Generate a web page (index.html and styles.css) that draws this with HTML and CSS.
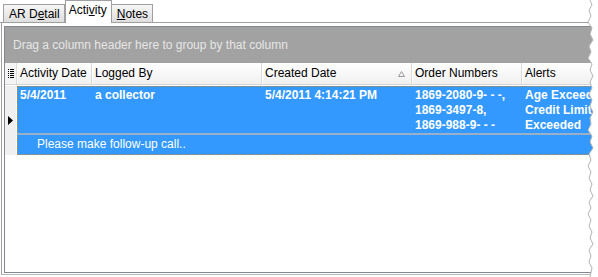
FILE: index.html
```html
<!DOCTYPE html>
<html>
  <head>
    <meta charset="utf-8" />
    <title>AR Activity</title>
    <link rel="stylesheet" href="styles.css">
  </head>
  <body>
    <div class="frame">
      <div class="tabs">
        <div class="tab">AR D<u>e</u>tail</div>
        <div class="tab active">Acti<u>v</u>ity</div>
        <div class="tab"><u>N</u>otes</div>
      </div>
      <div class="page">
        <div class="grid">
          <div class="group-panel">Drag a column header here to group by that column</div>
          <div class="grid-head">
            <div class="sel">
              <svg width="6" height="10" viewBox="0 0 6 10">
                <rect x="0" y="0" width="1" height="1" fill="#000" />
                <rect x="2" y="0" width="4" height="1" fill="#000" />
                <rect x="0" y="2" width="1" height="1" fill="#000" />
                <rect x="2" y="2" width="4" height="1" fill="#000" />
                <rect x="0" y="4" width="1" height="1" fill="#000" />
                <rect x="2" y="4" width="4" height="1" fill="#000" />
                <rect x="0" y="6" width="1" height="1" fill="#000" />
                <rect x="2" y="6" width="4" height="1" fill="#000" />
                <rect x="0" y="8" width="1" height="1" fill="#000" />
                <rect x="2" y="8" width="4" height="1" fill="#000" />
              </svg>
            </div>
            <div class="col c-date">Activity Date</div>
            <div class="col c-by">Logged By</div>
            <div class="col c-created">
              <span>Created Date</span>
              <svg class="sort" width="7" height="6" viewBox="0 0 7 6">
                <path d="M3.5 0.5 L6.5 5.5 L0.5 5.5 Z" fill="none" stroke="#9a9a9a" stroke-width="1" />
              </svg>
            </div>
            <div class="col c-orders">Order Numbers</div>
            <div class="col c-alerts">Alerts</div>
          </div>
          <div class="record">
            <div class="sel">
              <svg width="5" height="9" viewBox="0 0 5 9">
                <path d="M0 0 L5 4.5 L0 9 Z" fill="#000" />
              </svg>
            </div>
            <div class="record-body">
              <div class="data-row">
                <div class="cell c-date">5/4/2011</div>
                <div class="cell c-by">a collector</div>
                <div class="cell c-created">5/4/2011 4:14:21 PM</div>
                <div class="cell c-orders">1869-2080-9- - -,<br>1869-3497-8,<br>1869-988-9- - -</div>
                <div class="cell c-alerts">Age Exceeded,<br>Credit Limit<br>Exceeded</div>
              </div>
              <div class="preview">Please make follow-up call..</div>
            </div>
          </div>
        </div>
      </div>
      <svg class="torn" width="598" height="277" viewBox="0 0 598 277">
        <path d="M590 0 L592 5 L589 10 L591 16 L588 22 L592 28 L590 34 L593 40 L589 46 L591 52 L588 58 L592 64 L590 70 L593 76 L590 82 L592 88 L589 94 L592 100 L590 106 L593 112 L590 118 L591 124 L588 130 L592 136 L590 142 L593 148 L589 154 L591 160 L588 166 L591 172 L589 178 L592 184 L590 190 L593 196 L589 202 L591 208 L588 214 L591 220 L589 226 L592 232 L590 238 L593 244 L589 250 L591 256 L589 262 L592 268 L590 277 L598 277 L598 0 Z" fill="#fff" />
        <path d="M590 0 L592 5 L589 10 L591 16 L588 22 L592 28 L590 34 L593 40 L589 46 L591 52 L588 58 L592 64 L590 70 L593 76 L590 82 L592 88 L589 94 L592 100 L590 106 L593 112 L590 118 L591 124 L588 130 L592 136 L590 142 L593 148 L589 154 L591 160 L588 166 L591 172 L589 178 L592 184 L590 190 L593 196 L589 202 L591 208 L588 214 L591 220 L589 226 L592 232 L590 238 L593 244 L589 250 L591 256 L589 262 L592 268 L590 277" fill="none" stroke="#b4b4b4" stroke-width="1" />
      </svg>
    </div>
  </body>
</html>
```

FILE: styles.css
```css
body,
html {
  margin: 0;
  padding: 0;
  background: white;
}
body {
  width: 598px;
  height: 277px;
  overflow: hidden;
  font-family: "Liberation Sans", Arial, sans-serif;
  font-size: 12px;
  color: #000;
}
.frame {
  position: relative;
  width: 598px;
  height: 277px;
}
.tabs {
  display: flex;
  align-items: flex-end;
  height: 22px;
  padding-left: 3px;
  border-bottom: 1px solid #a0a0a0;
  box-sizing: content-box;
}
.tab {
  height: 18px;
  line-height: 18px;
  padding: 0 4px 0 5px;
  box-sizing: border-box;
  border: 1px solid #a0a0a0;
  border-bottom: none;
  background: linear-gradient(#f6f6f6, #dedede);
}
.tab u {
  text-underline-offset: 1px;
}
.tab.active {
  height: 23px;
  line-height: 19px;
  margin-bottom: -1px;
  background: #fff;
  padding: 0 4px 0 3px;
}
.tab.active + .tab {
  border-left: none;
}
.page {
  margin-left: 1px;
  border-left: 1px solid #a0a0a0;
  border-bottom: 1px solid #b8b8b8;
  height: 252px;
  padding: 3px 0 1px 2px;
  box-sizing: border-box;
}
.grid {
  height: 247px;
  border: 1px solid #828790;
  border-right: none;
  box-sizing: border-box;
  overflow: hidden;
}
.group-panel {
  height: 36px;
  line-height: 36px;
  padding-left: 8px;
  background: #a2a2a2;
  color: #e6e6e6;
}
.grid-head {
  display: flex;
  height: 22px;
  background: linear-gradient(#ffffff, #f0f0f0);
  border-bottom: 1px solid #d5d5d5;
  box-sizing: border-box;
}
.grid-head .sel {
  flex: 0 0 12px;
  display: flex;
  align-items: center;
  justify-content: center;
  border-right: 1px solid #dcdcdc;
  box-sizing: border-box;
  background: #f4f4f4;
}
.col {
  line-height: 21px;
  padding-left: 3px;
  border-right: 1px solid #dadada;
  box-shadow: inset 1px 0 0 #fff;
  box-sizing: border-box;
  white-space: nowrap;
}
.c-date {
  flex: 0 0 75px;
}
.c-by {
  flex: 0 0 170px;
}
.c-created {
  flex: 0 0 150px;
}
.grid-head .c-created {
  display: flex;
  align-items: center;
  justify-content: space-between;
  padding-right: 6px;
}
.c-orders {
  flex: 0 0 110px;
}
.c-alerts {
  flex: 1 0 90px;
  border-right: none;
}
.record {
  display: flex;
  margin-top: 1px;
  height: 69px;
}
.record .sel {
  flex: 0 0 12px;
  background: #f0f0f0;
  border-right: 1px solid #fff;
  box-sizing: border-box;
  display: flex;
  align-items: center;
  justify-content: center;
  padding-right: 1px;
}
.record-body {
  flex: 1;
  min-width: 0;
  background: #3399ff;
  border: 1px dotted #c88a3c;
  border-right: none;
  box-sizing: border-box;
  color: #fff;
}
.data-row {
  display: flex;
  height: 48px;
  border-bottom: 2px solid #9ab0c8;
  box-sizing: border-box;
  margin-left: -1px;
}
.cell {
  font-weight: bold;
  line-height: 15px;
  padding: 1px 0 0 3px;
  box-sizing: border-box;
  white-space: nowrap;
  overflow: hidden;
}
.preview {
  line-height: 18px;
  padding-left: 19px;
}
.torn {
  position: absolute;
  left: 0;
  top: 0;
}
```
